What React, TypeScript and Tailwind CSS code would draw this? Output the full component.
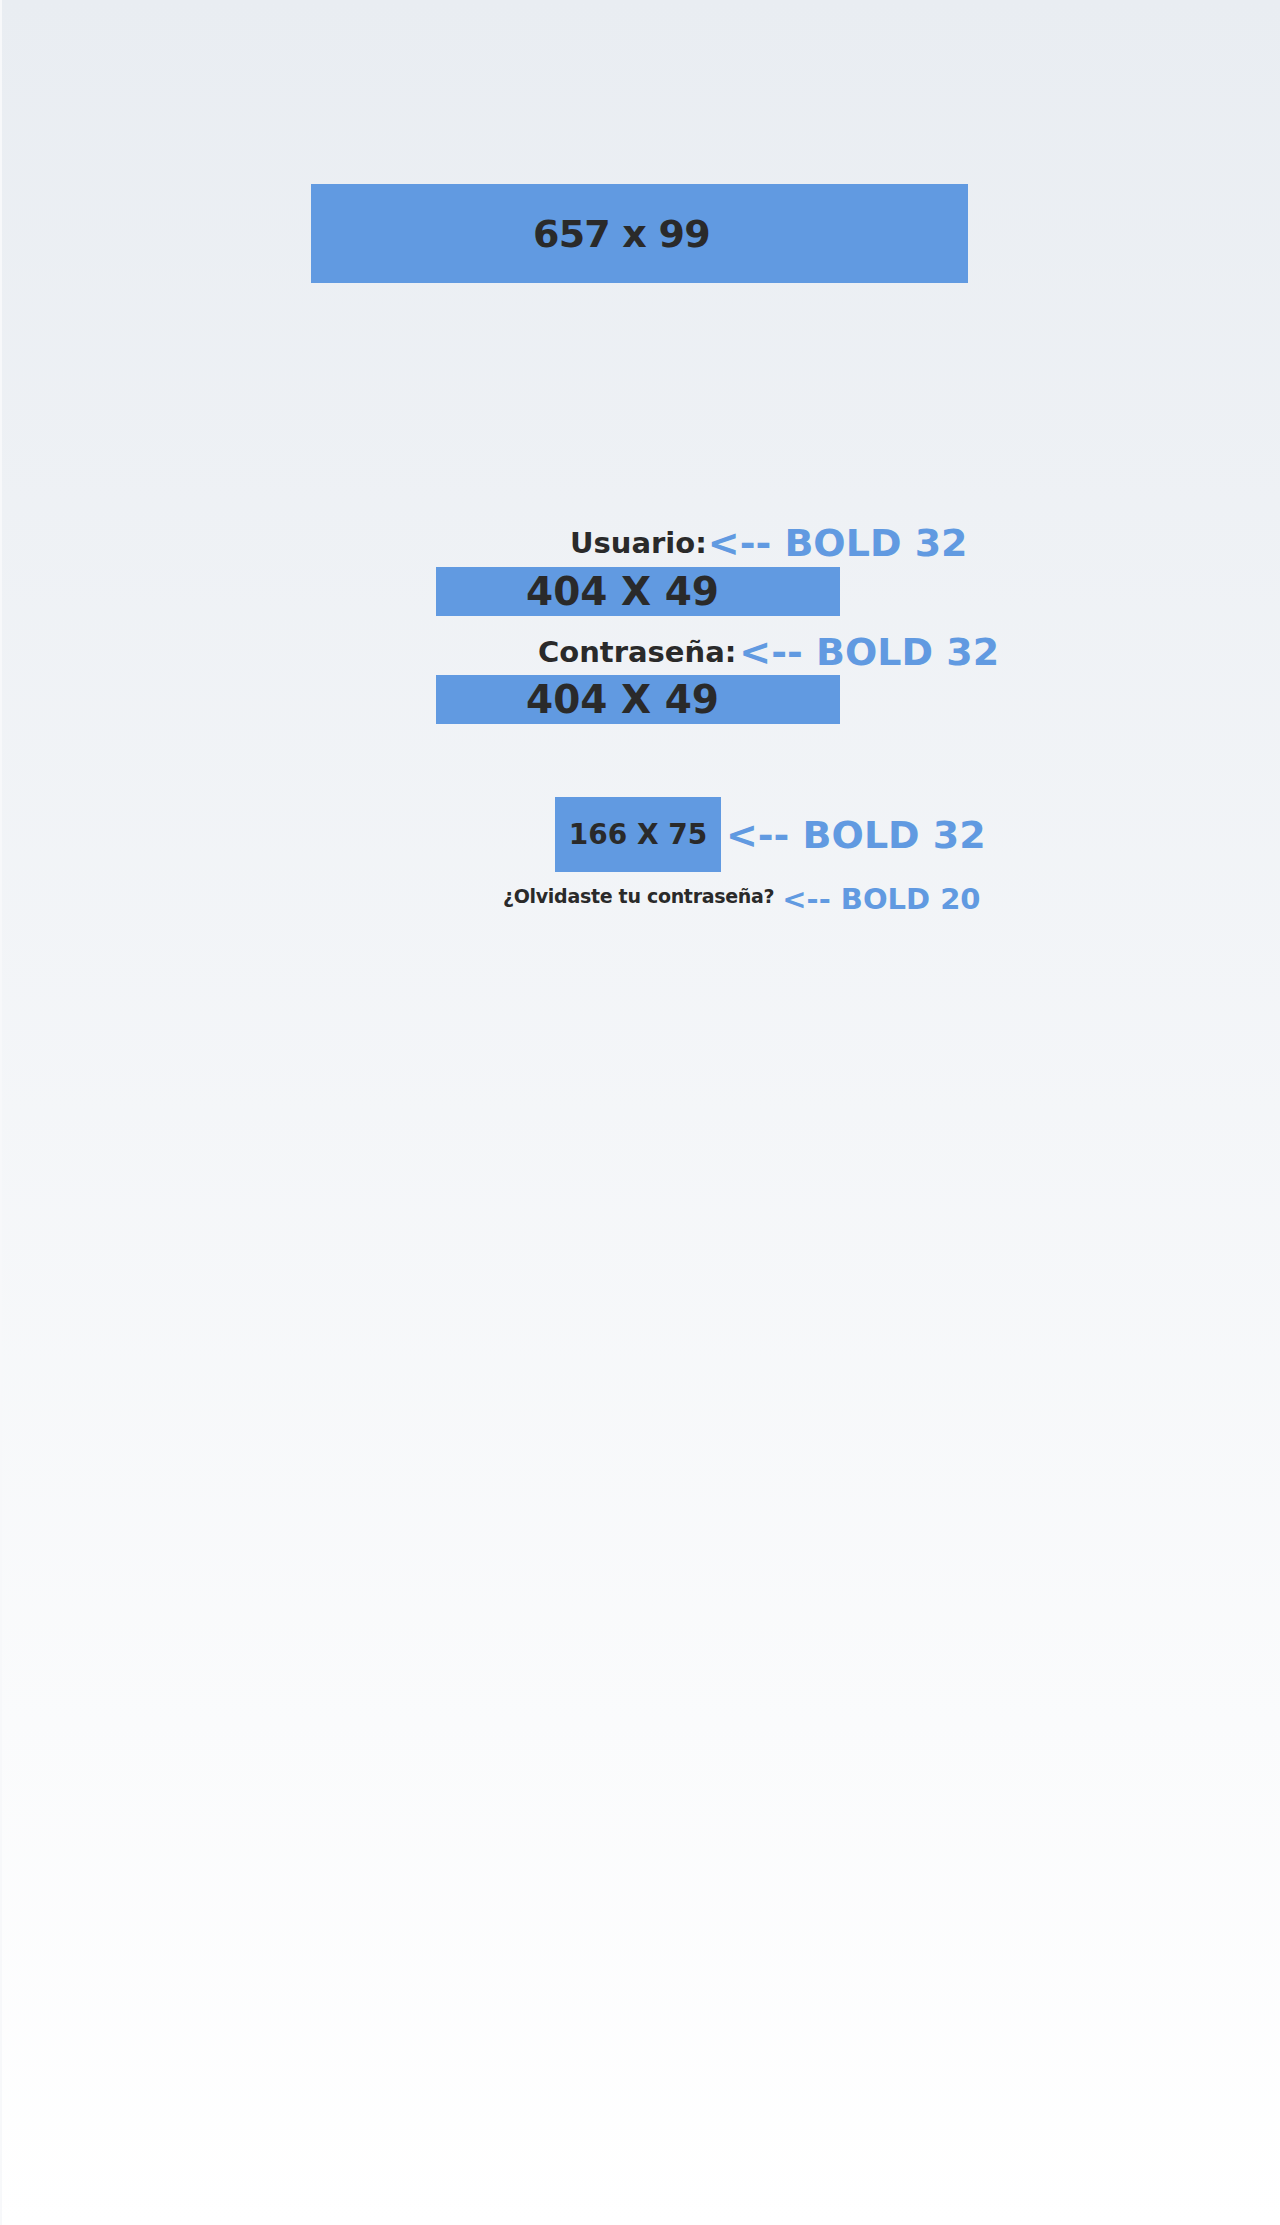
export default function App() {
  const font = { fontFamily: '"DejaVu Sans", "Liberation Sans", sans-serif' };

  return (
    <div
      className="flex min-h-[2225px] w-full flex-col border-l-2 border-[#f7f8fa] bg-[linear-gradient(to_bottom,#e9edf2,#ffffff)] pt-[184px] font-bold"
      style={font}
    >
      {/* Banner */}
      <div className="ml-[309px] flex h-[99px] w-[657px] items-center bg-[#619ae1] pl-[222px]">
        <span className="text-[38px] leading-none tracking-[-0.8px] text-[#2a2a2a]">657 x 99</span>
      </div>

      {/* Usuario */}
      <div className="ml-[568px] mt-[240px] flex h-[40px] items-center gap-[1px]">
        <span className="text-[29px] leading-none text-[#2a2a2a]">Usuario:</span>
        <span className="text-[38px] leading-none text-[#619ae1]">&lt;-- BOLD 32</span>
      </div>
      <div className="ml-[434px] mt-[4px] flex h-[49px] w-[404px] items-center bg-[#619ae1] pl-[90px]">
        <span className="text-[39px] leading-none text-[#2a2a2a]">404 X 49</span>
      </div>

      {/* Contraseña */}
      <div className="ml-[536px] mt-[16px] flex h-[40px] items-center gap-[3px]">
        <span className="text-[29px] leading-none text-[#2a2a2a]">Contraseña:</span>
        <span className="text-[38px] leading-none text-[#619ae1]">&lt;-- BOLD 32</span>
      </div>
      <div className="ml-[434px] mt-[3px] flex h-[49px] w-[404px] items-center bg-[#619ae1] pl-[90px]">
        <span className="text-[39px] leading-none text-[#2a2a2a]">404 X 49</span>
      </div>

      {/* Button */}
      <div className="ml-[553px] mt-[73px] flex items-center gap-[5px]">
        <button className="flex h-[75px] w-[166px] items-center justify-center bg-[#619ae1]">
          <span className="text-[28px] leading-none text-[#2a2a2a]">166 X 75</span>
        </button>
        <span className="text-[38px] leading-none text-[#619ae1]">&lt;-- BOLD 32</span>
      </div>

      {/* Forgot password */}
      <div className="ml-[501px] mt-[9px] flex h-[30px] items-center gap-[8px]">
        <span className="text-[19px] leading-none tracking-[-0.3px] text-[#2a2a2a]">¿Olvidaste tu contraseña?</span>
        <span className="mt-[6px] text-[29px] leading-none text-[#619ae1]">&lt;-- BOLD 20</span>
      </div>
    </div>
  );
}
